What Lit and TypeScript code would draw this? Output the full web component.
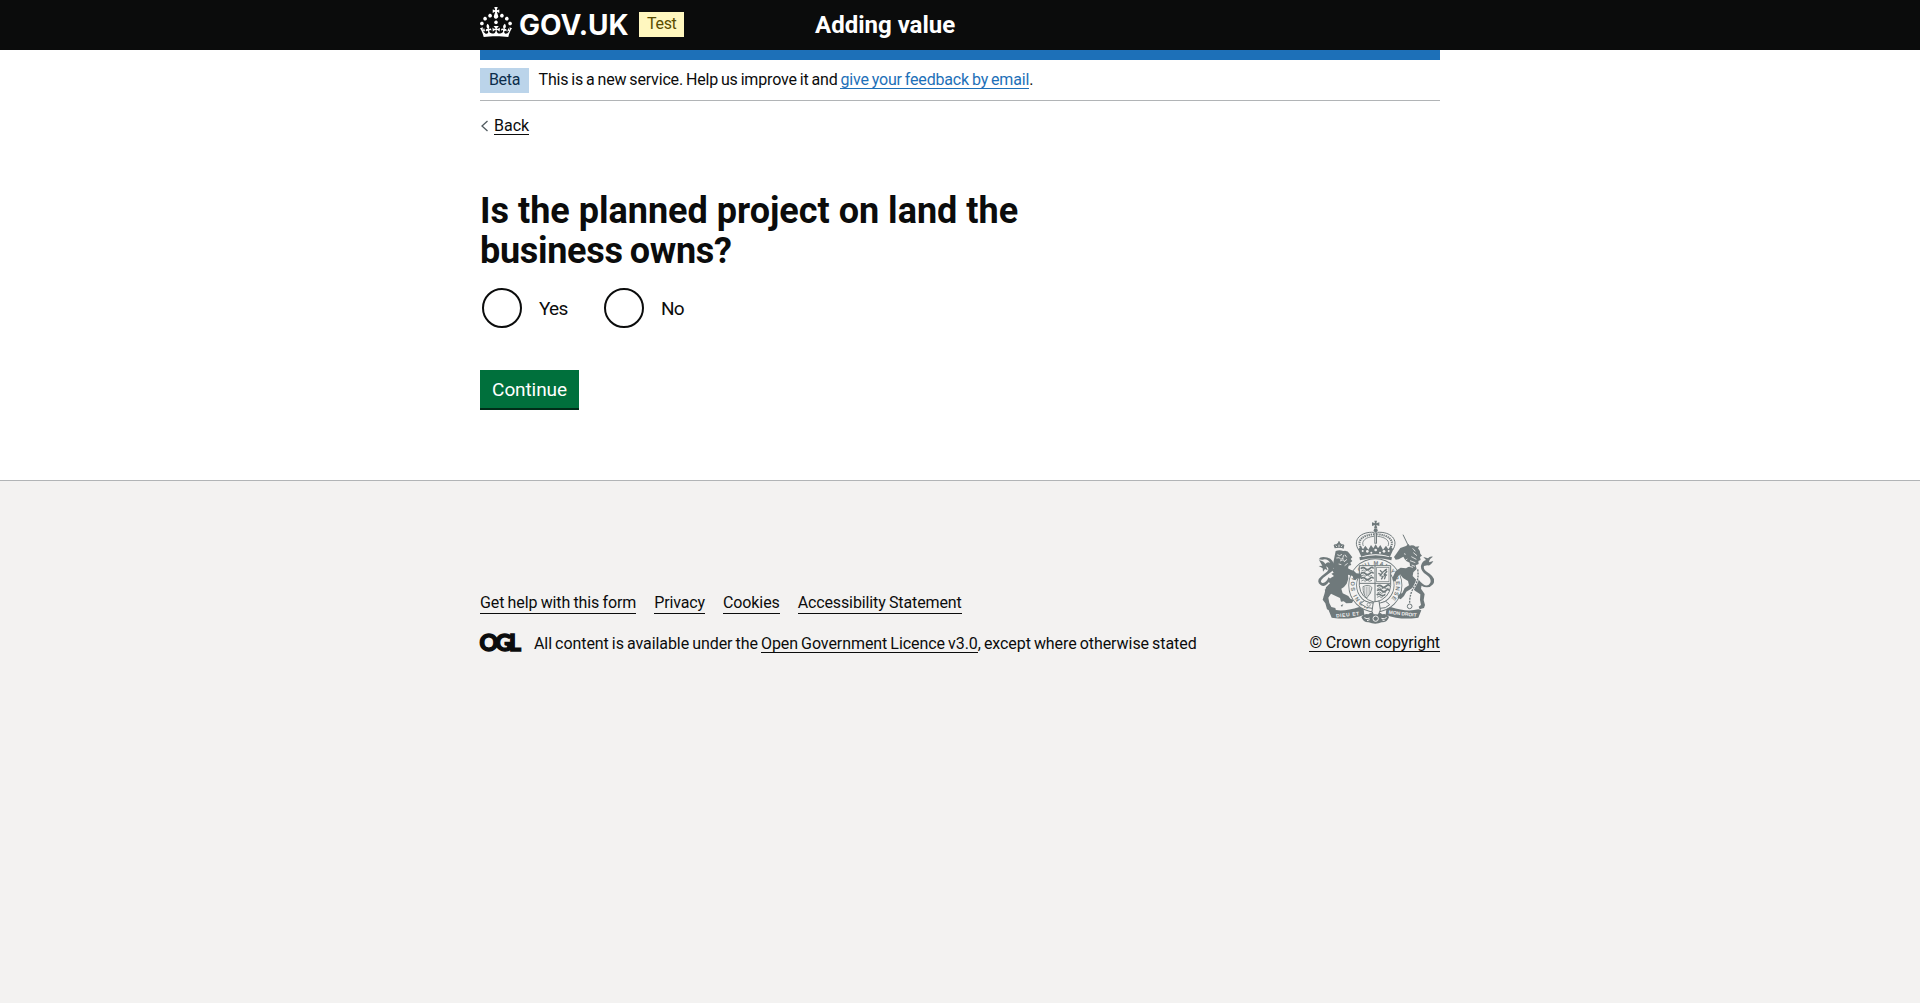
import { LitElement, html, css, svg } from 'lit';

const crown = svg`<path fill="currentColor" d="M22.6 10.4c-1 .4-2-.1-2.4-1-.4-.9.1-2 1-2.4.9-.4 2 .1 2.4 1s-.1 2-1 2.4m-5.9 6.7c-.9.4-2-.1-2.4-1-.4-.9.1-2 1-2.4.9-.4 2 .1 2.4 1s-.1 2-1 2.4m10.8-3.7c-1 .4-2-.1-2.4-1-.4-.9.1-2 1-2.4.9-.4 2 .1 2.4 1s0 2-1 2.4m3.3 4.8c-1 .4-2-.1-2.4-1-.4-.9.1-2 1-2.4.9-.4 2 .1 2.4 1s-.1 2-1 2.4M17 4.7l2.3 1.2V2.5l-2.3.7-.2-.2.9-3h-3.4l.9 3-.2.2c-.1.1-2.3-.7-2.3-.7v3.4L15 4.7c.1.1.1.2.2.2l-1.3 4c-.1.2-.1.4-.1.6 0 1.1.8 2 1.9 2.2h.7c1-.2 1.9-1.1 1.9-2.1 0-.2 0-.4-.1-.6l-1.3-4c-.1-.2 0-.2.1-.3m-7.6 5.7c.9.4 2-.1 2.4-1 .4-.9-.1-2-1-2.4-.9-.4-2 .1-2.4 1s0 2 1 2.4m-5 3c.9.4 2-.1 2.4-1 .4-.9-.1-2-1-2.4-.9-.4-2 .1-2.4 1s.1 2 1 2.4m-3.2 4.8c.9.4 2-.1 2.4-1 .4-.9-.1-2-1-2.4-.9-.4-2 .1-2.4 1s0 2 1 2.4m14.8 11c4.4 0 8.6.3 12.3.8 1.1-4.5 2.4-7 3.7-8.8l-2.5-.9c.2 1.3.3 1.9 0 2.7-.4-.4-.8-1.1-1.1-2.3l-1.2 4c.7-.5 1.3-.8 2-.9-1.1 2.5-2.6 3.1-3.5 3-1.1-.2-1.7-1.2-1.5-2.1.3-1.2 1.5-1.5 2.1-.1 1.1-2.3-.8-3-2-2.3 1.9-1.9 2.1-3.5.6-5.6-2.1 1.6-2.1 3.2-1.2 5.5-1.2-1.4-3.2-.6-2.5 1.6.9-1.4 2.1-.5 1.9.8-.2 1.1-1.7 2.1-3.5 1.9-2.7-.2-2.9-2.1-2.9-3.6.7-.1 1.9.5 2.9 1.9l.4-4.3c-1.1 1.1-2.1 1.4-3.2 1.4.4-1.2 2.1-3 2.1-3h-5.4s1.7 1.9 2.1 3c-1.1 0-2.1-.2-3.2-1.4l.4 4.3c1-1.4 2.2-2 2.9-1.9-.1 1.5-.2 3.4-2.9 3.6-1.9.2-3.4-.8-3.5-1.9-.2-1.3 1-2.2 1.9-.8.7-2.3-1.2-3-2.5-1.6.9-2.2.9-3.9-1.2-5.5-1.5 2-1.3 3.7.6 5.6-1.2-.7-3.1 0-2 2.3.6-1.4 1.8-1.1 2.1.1.2.9-.3 1.9-1.5 2.1-.9.2-2.4-.5-3.5-3 .6 0 1.2.3 2 .9l-1.2-4c-.3 1.1-.7 1.9-1.1 2.3-.3-.8-.2-1.4 0-2.7l-2.9.9C1.3 23 2.6 25.5 3.7 30c3.7-.5 7.9-.8 12.3-.8"/>`;

const INK = '#6f797b';
const PAPER = '#f3f2f1';

const crestCrown = svg`
  <g fill=${INK}>
    <path d="M223 32h8l-2 8 9-3v11l-9-3 3 10h-10l3-10-9 3V37l9 3z"/>
    <circle cx="227" cy="61" r="6"/>
    <path d="M223 67h8v34h-8z"/>
    <path d="M174 118l9-9 6 9 7-11 9 12 8-14 7 10 7-12 7 12 7-10 8 14 9-12 7 11 6-9 9 9-10 22q-43-13-86 0z"/>
    <path d="M178 142q49-14 98 0l-2 9q-47-12-94 0z"/>
  </g>
  <g fill="none" stroke=${INK}>
    <path stroke-width="3" d="M176 120C156 90 182 64 222 67M278 120c20-30-6-56-46-53"/>
    <path stroke-width="6" stroke-dasharray="4 2.500" d="M182 111c-12-18 6-37 40-38M272 111c12-18-6-37-40-38"/>
    <path stroke-width="2.500" d="M190 108c-7-14 6-27 32-29M264 108c7-14-6-27-32-29"/>
  </g>
  <g fill=${PAPER}>
    <circle cx="202" cy="124" r="4"/><circle cx="252" cy="124" r="4"/><circle cx="227" cy="120" r="4"/>
    <circle cx="188" cy="123" r="3"/><circle cx="266" cy="123" r="3"/>
    <circle cx="214" cy="128" r="3"/><circle cx="240" cy="128" r="3"/>
    <path d="M187 139q40-12 80 0v2q-40-11-80 0z"/>
    <path d="M226 70h2v28h-2z"/>
  </g>`;

const garter = svg`
  <circle cx="226" cy="226" r="68" fill=${PAPER} stroke=${INK} stroke-width="26"/>
  <circle cx="226" cy="226" r="68" fill="none" stroke=${PAPER} stroke-width="21"/>
  <path id="motto" fill="none" d="M207 286A62 62 0 1 1 245 286"/>
  <text class="motto" fill=${INK}><textPath href="#motto" textLength="315">HONI SOIT QUI MAL Y PENSE</textPath></text>`;

const shield = svg`
  <path fill=${PAPER} stroke=${INK} stroke-width="3" d="M178 167h94v60q-2 37-47 51-45-14-47-51z"/>
  <path fill="none" stroke=${INK} stroke-width="3" d="M225 167v111M178 220h94"/>
  <g fill="none" stroke=${INK} stroke-width="5">
    <path d="M182 176q8-6 14 0t14-1 10 1M182 191q8-6 14 0t14-1 10 1M182 206q8-6 14 0t14-1 10 1"/>
    <path stroke-width="2.500" d="M184 183l6-3 5 4 7-4 6 4 8-3M184 198l6-3 5 4 7-4 6 4 8-3M184 213l6-3 5 4 7-4 6 4 8-3"/>
    <path d="M231 229q8-6 14 0t14-1 10 1M231 242q8-6 14 0t14-1 8 1M230 255q7-5 12 0t14-2"/>
    <path stroke-width="2.500" d="M232 236l7-3 6 4 7-4 6 4 7-3M232 249l7-3 6 4 7-4 6 3M231 262l7-3 6 4 5-4"/>
    <rect x="230" y="172" width="37" height="43" stroke-width="2"/>
    <path stroke-width="4" d="M240 181l7 7 9-8 4 5-7 7 8 4M248 188l-7 9 8 2-5 9M252 194l4 6-3 8M235 190l7 3M256 180l5-3"/>
    <path stroke-width="2.500" d="M189 230q18-9 27 3-2 18-16 31-11-9-11-34z"/>
    <path stroke-width="1.500" d="M194 231v24M199 230v29M204 229v29M209 230v22"/>
  </g>`;

const lion = svg`
  <g fill=${INK}>
    <path d="M104 115l-3-9q2-5 8-3 2-5 8-5t8 5q6-2 8 3l-2 10q-13-5-27-1z"/>
    <path d="M117 93l3 3-1 6h-4l-1-6z"/>
    <path d="M107 123q12-5 23 0 13-3 19 8l8 11-5 5 5 6-6 5 3 7-8 2-2 8 8 4 10 4 7 7 13 1 4 7-6 8-8-1-5 5-7-4-2-8-14-4 1 12-5 15-8 10-8 5 4 14 17 8 6 8 10 4-5 9-17 1-8-6-8 1-3-11-13-6-14-7-8 12 3 16 6 12 12 3 2 8-17 1-10-5-5-18-8-11 6-20 4-17 12-12-7-7q6-9 19-15l-8-7 7-3-6-9 7-3-4-9z"/>
    <path d="M92 208q-15 27-30 17-16-12 3-27l16-13q10-10-3-16l5 12-8-4-6 8-1-10-12-7 11-1-10-17q15 3 19 12 7-9 14-3-7-15-23-10l-11-1q4-7 14-7 26 0 32 22 3 16-14 27l-18 13q-13 11-3 16 10 2 19-17z"/>
    <path d="M74 239l12-4-5 9 9-2-10 10zM71 259l9-4-4 10zM130 283l-8 3 4 5zM86 295l-5-6 7 1z"/>
  </g>
  <g fill="none" stroke=${PAPER} stroke-width="2.500">
    <path d="M112 134l7 3 7-4M109 144l9-1 4 5 9-4M120 153l10-4 4 7M135 134l5 8M141 148l-7 6M116 162l8 2M143 160l-9 7M128 143l4-8M107 107l4 4M117 104v7M127 107l-4 4"/>
  </g>`;

const unicorn = svg`
  <path fill="none" stroke=${INK} stroke-width="3" d="M309 74l15 31"/>
  <g fill=${INK}>
    <path d="M318 108l8-6 3 5q10-3 18 3l11-1-4 6q7 8 7 16l5 6-6 4 2 9-7 3 1 9-9 4 3 11-10 10-2 11 17 18 10 8-2 12 11 16-3 18 4 15-3 9-13 4-3-8 7-5-3-15 1-17-15-10-10-8-17 10-7 13-10 10-9-5 2-9 12-5 7-15 13-8-3-13-15-9-9-11-7 7-7 15-8-4 1-11 8-17 15-10 16 2 12-7-1-10-12-6-7-12-14 8-9 1-5-8 7-10 12-17z"/>
    <path d="M354 207q25 31 36 13 7-13-11-26-18-12-16-27 3-13 15-17l-8-9 14 4q6-8 15-5-12 7-12 17l13-4q-9 16-18 13l-10 2q-4 12 17 23 21 16 10 32-14 18-44 0z"/>
  </g>
  <g fill="none" stroke=${PAPER} stroke-width="2.500">
    <path d="M338 115l8 9M340 128l11 9M334 140l15 8M330 152l16 6M312 131l5 2M315 152l7-5M311 171l13-3 15 4M335 165l10 4"/>
  </g>
  <path fill="none" stroke=${PAPER} stroke-width="7" d="M353 178q5 30-10 52t-14 51"/>
  <path fill="none" stroke=${INK} stroke-width="4" stroke-dasharray="6 3" d="M353 178q5 30-10 52t-14 51"/>
  <circle cx="329" cy="289" r="7" fill="none" stroke=${INK} stroke-width="3"/>`;

const ribbons = svg`
  <g fill=${INK}>
    <path d="M86 301l9-3q35 9 83-7l13 7 2 16q-40 16-92 10l-6-1z"/>
    <path d="M364 301l-9-3q-35 9-83-7l-13 7-2 16q40 16 92 10l6-1z"/>
    <path d="M184 321q7-11 21-8 10-10 21-1 11-9 21 1 14-3 20 8-5 17-22 16-19 8-39 0-16 1-22-16z"/>
  </g>
  <path fill=${PAPER} stroke=${INK} stroke-width="3" d="M181 281l12-9q33 15 64 2l12 10-13 9q-31 8-57-1z"/>
  <path fill=${PAPER} stroke=${INK} stroke-width="3" d="M220 276l17-3 4 27-6 15-15-1-4-10z"/>
  <g fill="none" stroke=${PAPER} stroke-width="3">
    <circle cx="227" cy="326" r="8"/><path d="M193 323q8 6 16 1M244 325q10 4 16-3M201 332l8-3M247 330l7 2"/>
  </g>
  <circle cx="206" cy="284" r="5" fill="none" stroke=${INK} stroke-width="2"/>
  <text class="scroll" fill=${PAPER} x="108" y="319" textLength="70" transform="rotate(-6 143 316)">DIEU ET</text>
  <text class="scroll" fill=${PAPER} x="266" y="316" textLength="84" transform="rotate(6 308 312)">MON DROIT</text>`;

class AppRoot extends LitElement {
  static styles = css`
    :host {
      display: flex;
      flex-direction: column;
      min-height: 100vh;
      font-family: Roboto, "Noto Sans", Arial, sans-serif;
      font-size: 16px;
      line-height: 20px;
      color: #0b0c0c;
      background: #fff;
    }
    .container { width: 960px; margin: 0 auto; }
    header { background: #0b0c0c; color: #fff; height: 50px; }
    .head { display: flex; height: 50px; }
    .brand { display: flex; width: 335px; }
    .crown { width: 32px; height: 30px; margin-top: 7px; display: block; }
    .wordmark { font: 700 28px/30px Inter, sans-serif; margin: 10px 0 0 7px; width: 112px; }
    .tag { height: 25px; line-height: 25px; padding: 0 8px; box-sizing: border-box; text-align: center; letter-spacing: -0.3px; }
    .test { width: 45px; margin: 12px 0 0 8px; line-height: 24px; background: #fff7bf; color: #594d00; }
    .title { font-size: 24px; font-weight: 700; line-height: 30px; margin-top: 10px; }
    .bar { height: 10px; background: #1d70b8; }
    .phase { display: flex; align-items: center; gap: 9.5px; height: 40px; border-bottom: 1px solid #b1b4b6; }
    .beta { width: 49px; line-height: 24px; background: #bbd4ea; color: #0c2d4a; }
    .notice { letter-spacing: -0.17px; word-spacing: -0.85px; }
    a { color: inherit; text-decoration: none; border-bottom: 1px solid; line-height: 17px; display: inline-block; white-space: nowrap; }
    .phase a { color: #1d70b8; }
    .back { display: flex; align-items: center; gap: 5px; margin-top: 15px; height: 20px; }
    .back svg { width: 9px; height: 12px; }
    h1 { margin: 55px 0 0; font-size: 36px; line-height: 40px; font-weight: 700; width: 560px; }
    h1 span { display: block; }
    .second { letter-spacing: -0.3px; word-spacing: -1.5px; }
    .radios { display: flex; gap: 30px; padding: 17px 0 0 2px; font-size: 19px; }
    label { display: flex; align-items: center; gap: 17px; width: 92px; height: 40px; letter-spacing: -0.7px; }
    .choice { padding-top: 1px; }
    .dot { width: 40px; height: 40px; box-sizing: border-box; border: 2px solid #0b0c0c; border-radius: 50%; }
    button { display: block; margin: 42px 0 72px; width: 99px; height: 38px; border: 0; padding: 1px 0 0; background: #00703c; color: #fff; box-shadow: 0 2px 0 #002d18; font: 400 19px/37px Roboto, sans-serif; letter-spacing: -0.1px; }
    footer { flex: 1; background: #f3f2f1; border-top: 1px solid #b1b4b6; }
    .foot { display: flex; justify-content: space-between; padding-top: 39px; }
    .meta { padding-top: 74px; }
    .links { display: flex; gap: 18px; height: 20px; margin-bottom: 20px; letter-spacing: -0.12px; word-spacing: -0.5px; }
    .licence { display: flex; gap: 13px; height: 20px; white-space: nowrap; letter-spacing: -0.07px; word-spacing: -0.8px; }
    .ogl { width: 41px; height: 18px; display: block; overflow: visible; font: 900 23px Lato, sans-serif; letter-spacing: 0; }
    .copy { width: 131px; display: flex; flex-direction: column; align-items: flex-end; letter-spacing: -0.11px; }
    .crest { width: 118px; height: 104px; margin-right: 6.5px; display: block; letter-spacing: 0; }
    .copy a { margin-top: 10px; }
    .motto { font: 700 17px "Liberation Sans", sans-serif; }
    .scroll { font: 700 15px "Liberation Sans", sans-serif; }
  `;
  render() {
    return html`
      <header><div class="container head">
        <div class="brand">
          <svg class="crown" viewBox="0 0 32 30">${crown}</svg>
          <span class="wordmark">GOV.UK</span>
          <span class="tag test">Test</span>
        </div>
        <div class="title">Adding value</div>
      </div></header>
      <div class="container">
        <div class="bar"></div>
        <div class="phase">
          <span class="tag beta">Beta</span>
          <span class="notice">This is a new service. Help us improve it and <a href="#">give your feedback by email</a>.</span>
        </div>
        <div class="back">
          <svg viewBox="0 0 9 12"><path d="M7.500 1L2 6l5.500 5" fill="none" stroke="#505a5f" stroke-width="1.300"/></svg>
          <a href="#">Back</a>
        </div>
        <main>
          <h1><span>Is the planned project on land the</span> <span class="second">business owns?</span></h1>
          <div class="radios">
            <label><span class="dot"></span><span class="choice">Yes</span></label>
            <label><span class="dot"></span><span class="choice">No</span></label>
          </div>
          <button>Continue</button>
        </main>
      </div>
      <footer><div class="container foot">
        <div class="meta">
          <div class="links">
            <a href="#">Get help with this form</a><a href="#">Privacy</a><a href="#">Cookies</a><a href="#">Accessibility Statement</a>
          </div>
          <div class="licence">
            <svg class="ogl" viewBox="0 0 41 18"><text x="-0.500" y="16.800" textLength="41.500" fill="currentColor" stroke="currentColor" stroke-width="1.400">OGL</text></svg>
            <span>All content is available under the <a href="#">Open Government Licence v3.0</a>, except where otherwise stated</span>
          </div>
        </div>
        <div class="copy">
          <svg class="crest" viewBox="48 30 354 312">${garter}${shield}${crestCrown}${lion}${unicorn}${ribbons}</svg>
          <a href="#">© Crown copyright</a>
        </div>
      </div></footer>`;
  }
}
customElements.define('app-root', AppRoot);
